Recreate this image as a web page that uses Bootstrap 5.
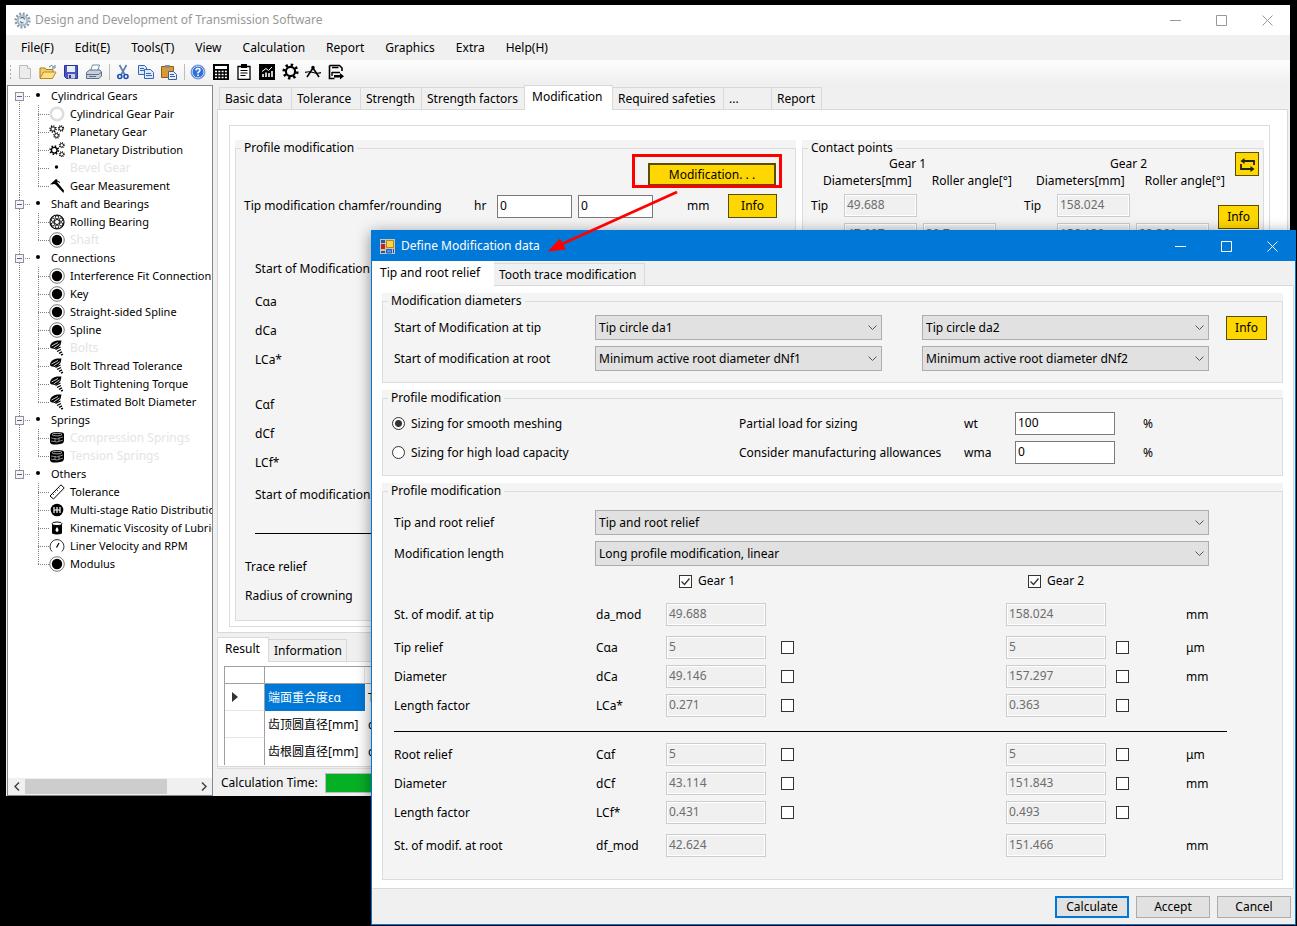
<!DOCTYPE html>
<html lang="en">
<head>
<meta charset="utf-8">
<meta name="viewport" content="width=device-width, initial-scale=1">
<title>Design and Development of Transmission Software</title>
<link href="https://cdn.jsdelivr.net/npm/bootstrap@5.3.0/dist/css/bootstrap.min.css" rel="stylesheet">
<style>
  body { background: #000; color: #000; font: 12px/16px "Noto Sans", "Noto Sans CJK SC", sans-serif; }
  button, input, select { font: inherit; color: inherit; border-radius: 0; }
  a { color: inherit; text-decoration: none; }
  label, .nowrap { white-space: nowrap; }

  /* windows */
  .app-window { margin: 5px 7px 0 6px; background: #f0f0f0; }
  .title-bar { height: 30px; background: #fff; color: #999; padding-left: 8px; }
  .win-btn { width: 46px; height: 30px; padding: 0; border: 0; background: none; color: inherit; }
  .win-btn svg { display: block; margin: auto; }
  .menu-bar { height: 25px; padding-left: 4px; }
  .menu-bar a { padding: 0 10px 0 11px; }
  .tool-bar { height: 25px; padding: 0 0 2px 3px; gap: 3px; background: linear-gradient(#fdfdfd, #efefef); }
  .tool-bar button { width: 20px; height: 22px; padding: 0; border: 0; background: none; }
  .tool-bar svg { display: block; margin: auto; }
  .grip { width: 3px; height: 15px; background: radial-gradient(circle, #aaa 1px, transparent 1px) 0 0 / 3px 4px; }
  .tool-sep { width: 3px; height: 16px; border-right: 1px solid #bdbdbd; }

  /* navigation tree */
  .tree-pane { flex: 0 0 206px; margin-left: 1px; background: #fff; border: 1px solid #828790; overflow: hidden; font-size: 11px; }
  .tree-pane ul { list-style: none; margin: 0; padding: 0; }
  .tree-pane .tree-root { padding-top: 1px; }
  .tree-row { height: 18px; display: flex; align-items: center; white-space: nowrap; }
  .branch { background: repeating-linear-gradient(#808080 0 1px, transparent 1px 2px) 11px 0 / 1px 100% no-repeat; }
  .branch:first-child { background-position: 11px 9px; }
  .branch:last-child { background-size: 1px 9px; }
  .branch > .tree-row { padding-left: 7px; }
  .expander { width: 9px; height: 9px; padding: 0; border: 1px solid #919191; background: linear-gradient(#4b63a7, #4b63a7) 1px 3px / 5px 1px no-repeat #f4f4f4; }
  .dash { width: 6px; height: 1px; margin-right: 6px; background: repeating-linear-gradient(90deg, transparent 0 1px, #808080 1px 2px); }
  .bullet { width: 4px; height: 4px; border-radius: 50%; background: #000; margin: 0 11px 2px 0; }
  .leaf { padding-left: 41px; background:
    repeating-linear-gradient(#808080 0 1px, transparent 1px 2px) 30px 0 / 1px 100% no-repeat,
    repeating-linear-gradient(90deg, #808080 0 1px, transparent 1px 2px) 30px 9px / 11px 1px no-repeat; }
  .leaf:last-child { background-size: 1px 9px, 11px 1px; }
  .leaf svg { flex: none; margin-right: 5px; }
  .leaf.off a { color: #e4e4e4; font-size: 12px; }
  .h-scroll { height: 17px; background: #f0f0f0; }
  .h-scroll .thumb { width: 142px; height: 15px; background: #cdcdcd; }
  .h-scroll button { width: 17px; height: 17px; border: 0; padding: 0; background: none; }
  .h-scroll svg { display: block; margin: auto; }

  /* tabs */
  .tab-strip { padding-left: 2px; align-items: flex-end; }
  .tab-strip button { height: 22px; padding: 0 4px 0 5px; border: 1px solid #d9d9d9; border-bottom: 0; margin-right: -1px; background: #f0f0f0; text-align: left; white-space: nowrap; }
  .tab-strip .active { height: 25px; margin: 0 -1px -1px -1px; padding: 0 7px 3px; background: #fff; position: relative; }
  .main-tabs button { min-width: 62px; }
  .main-tabs button:nth-child(1) { min-width: 73px; }
  .main-tabs button:nth-child(2) { min-width: 70px; }
  .main-tabs button:nth-child(4) { min-width: 105px; }
  .main-tabs button:nth-child(5) { min-width: 89px; }
  .main-tabs button:nth-child(6) { min-width: 112px; }
  .main-tabs button:nth-child(7) { min-width: 49px; }
  .main-tabs button:nth-child(8) { min-width: 51px; }
  .result-tabs { padding-left: 0; }
  .result-tabs button:nth-child(1) { min-width: 52px; }
  .result-tabs button:nth-child(2) { min-width: 78px; }
  .dialog-tabs { padding-left: 1px; }
  .dialog-tabs button:nth-child(1) { min-width: 122px; border-color: #fff; }
  .dialog-tabs button:nth-child(2) { min-width: 152px; }
  .tab-page { background: #fff; border: 1px solid #d9d9d9; }
  .work-pane { margin: 0 2px 0 4px; min-width: 0; }
  .work-page { padding: 15px 17px 5px 11px; }
  .work-frame { border: 1px solid #dcdcdc; padding: 14px 5px 5px; gap: 6px; }

  /* group boxes */
  .group-bg { background: #f4f4f4; min-width: 0; }
  .group-bg fieldset { border: 1px solid #dcdcdc; height: 100%; }
  .group-bg legend { float: none; width: auto; margin: 0 0 0 5px; padding: 0 3px; font-size: 12px; line-height: 16px; }
  .group-profile { flex: 561 1 0; }
  .group-contact { flex: 462 1 0; }

  /* fields */
  .field { width: 100%; min-width: 0; height: 23px; padding: 0 2px 2px; border: 1px solid #7a7a7a; background: #fff; }
  .field:disabled { border-color: #ccc; background: #f0f0f0; color: #6d6d6d; box-shadow: inset 0 0 0 1px #fff; }
  .combo { width: 100%; height: 25px; padding: 0 20px 0 3px; border: 1px solid #adadad; appearance: none;
    background: #e1e1e1 url("data:image/svg+xml,%3Csvg xmlns='http://www.w3.org/2000/svg' width='9' height='6'%3E%3Cpath d='M.5.5l4 4 4-4' fill='none' stroke='%23555'/%3E%3C/svg%3E") right 4px center no-repeat; }
  .gold { height: 24px; padding: 0; border: 1px solid #5c4d00; background: gold; }
  .gold-strong { width: 128px; height: 23px; border-width: 2px; }
  .tick { appearance: none; flex: none; width: 13px; height: 13px; margin: 0; border: 1px solid #333; background: #fff; }
  .tick:checked { background: #fff url("data:image/svg+xml,%3Csvg xmlns='http://www.w3.org/2000/svg' width='11' height='11'%3E%3Cpath d='M1.500 5.500l3 3 5-6' fill='none' stroke='%23333' stroke-width='1.300'/%3E%3C/svg%3E"); }
  .tick[type=radio] { border-radius: 50%; }
  .tick[type=radio]:checked { background: radial-gradient(circle, #333 3px, #fff 4px); }
  .rule { height: 1px; background: #000; }

  .mod-row { display: flex; justify-content: flex-end; padding: 7px 19px 0 0; }
  .tip-row { display: grid; grid-template-columns: 1fr 23px 75px 6px 75px 34px 41px 49px; align-items: center; padding: 8px 18px 0 8px; }
  .bg-row { height: 29px; display: flex; align-items: center; padding-left: 19px; }
  .bg-row.tall { height: 36px; }
  .bg-row.wide { padding-left: 9px; }
  .bg-row.first-row { margin-top: 33px; }
  .bg-rule { margin: 20px 19px 18px; }
  .group-end { margin-bottom: 10px; }
  .gear-block { flex: 0 0 185px; min-width: 0; }
  .gear-head { height: 18px; padding-left: 12px; gap: 20px; }
  .gear-row { display: grid; grid-template-columns: 33px 73px 6px 73px; align-items: center; margin-bottom: 6px; }
  .gear-tools { margin-top: -4px; gap: 29px; }

  /* result grid */
  .result-page { padding: 4px 0 1px 6px; }
  .result-grid { width: 100%; table-layout: fixed; border-collapse: separate; border-spacing: 0; border-top: 1px solid #a0a0a0; border-left: 1px solid #a0a0a0; }
  .result-grid th, .result-grid td { height: 27px; padding: 0 3px; border-bottom: 1px solid #e5e5e5; font-weight: 400; white-space: nowrap; }
  .result-grid tr > :first-child { border-right: 1px solid #a0a0a0; }
  .result-grid thead th { height: 17px; border-bottom: 1px solid #a0a0a0; border-right: 1px solid #e5e5e5; }
  .result-grid tbody tr:last-child > * { border-bottom: 0; }
  .result-grid td { border-bottom: 0; }
  .result-grid .picked { background: #0078d7; color: #fff; }
  .status { height: 28px; padding: 1px 0 0 4px; border-top: 1px solid #dcdcdc; margin-top: 1px; gap: 7px; }
  .status .progress { height: 20px; flex: 1; border-radius: 0; border: 1px solid #bcbcbc; background: #e6e6e6; }
  .status .progress-bar { background: #06b025; }

  /* dialog */
  .dialog-window { position: absolute; left: 371px; right: 1px; top: 230px; z-index: 2; background: #f0f0f0; border: 1px solid #0078d7; box-shadow: 0 3px 14px rgba(0,0,0,.45); }
  .dialog-title { height: 30px; background: #0078d7; color: #fff; padding-left: 8px; gap: 6px; }
  .dialog-page { padding: 7px 10px 8px 9px; margin-right: 1px; border-left-color: #fff; display: flex; flex-direction: column; gap: 7px; }
  .body { padding: 6px 15px 11px 11px; }
  .grid-diam { display: grid; grid-template-columns: 201px minmax(0,1fr) 40px minmax(0,1fr) 17px 41px; row-gap: 6px; align-items: center; }
  .grid-size { display: grid; grid-template-columns: 1fr 225px 51px 100px 28px 124px; row-gap: 6px; align-items: center; }
  .grid-size .choice { display: flex; align-items: center; gap: 6px; margin-left: -2px; }
  .body-long { padding: 11px 15px 16px 11px; }
  .grid-combo { display: grid; grid-template-columns: 201px minmax(0,1fr); row-gap: 6px; align-items: center; padding-right: 58px; }
  .grid-val { display: grid; grid-template-columns: 202px 70px 100px 28px 1fr 100px 23px 138px; align-items: center; margin-bottom: 6px; }
  .grid-val > .tick { justify-self: end; }
  .grid-val .unit { grid-column: 8; padding-left: 57px; }
  .g2 { grid-column: 6; }
  .gear-checks { margin: 7px 0 14px; }
  .gear-check { display: flex; align-items: center; gap: 6px; padding-left: 13px; }
  .gear-check.g2 { padding-left: 22px; }
  .apart { padding-top: 4px; }
  .body-rule { margin: 14px 40px 11px 0; }
  .dialog-foot { height: 35px; padding-right: 4px; gap: 7px; }
  .dialog-foot button { width: 74px; height: 22px; padding: 0; border: 1px solid #adadad; background: #e1e1e1; }
  .dialog-foot .main-action { border: 2px solid #0078d7; }
  .callout { position: absolute; left: 540px; top: 150px; z-index: 3; pointer-events: none; }
</style>
</head>
<body>

<svg class="d-none" aria-hidden="true">
  <symbol id="i-ring" viewBox="0 0 16 16"><circle cx="8" cy="8" r="6.300" fill="none" stroke="#ddd" stroke-width="2.600"/></symbol>
  <symbol id="i-dot" viewBox="0 0 16 16"><circle cx="8" cy="8" r="7.300" fill="#fff" stroke="#555" stroke-width=".8"/><circle cx="8" cy="8" r="5.200"/></symbol>
  <symbol id="i-cog" viewBox="0 0 16 16"><g fill="none" stroke="currentColor"><circle cx="8" cy="8" r="4.300" stroke-width="2"/><circle cx="8" cy="8" r="6.200" stroke-width="2.800" stroke-dasharray="2.200 2.670"/></g></symbol>
  <symbol id="i-gears" viewBox="0 0 16 16"><use href="#i-cog" x="0" y="1" width="8" height="8"/><use href="#i-cog" x="8.500" y="1" width="7" height="7"/><use href="#i-cog" x="4" y="8" width="7" height="7"/></symbol>
  <symbol id="i-gears2" viewBox="0 0 16 16"><use href="#i-cog" x="0" y="3" width="10.500" height="10.500"/><use href="#i-cog" x="9.500" y="0" width="6.500" height="6.500"/><use href="#i-cog" x="9.500" y="9" width="6.500" height="6.500"/></symbol>
  <symbol id="i-spot" viewBox="0 0 16 16"><circle cx="7.500" cy="7" r="1.700"/></symbol>
  <symbol id="i-caliper" viewBox="0 0 16 16"><path d="M1 6.500L7 1l1.500 1L8 4l7 8.500-.5 2.500L6.500 6.500 5 6z"/><path d="M8 3l3 1.500M3 6l2-1" stroke="#000"/></symbol>
  <symbol id="i-bearing" viewBox="0 0 16 16"><g fill="none" stroke="#000" stroke-width=".9"><circle cx="8" cy="8" r="7" stroke-width="1.200"/><circle cx="8" cy="8" r="2.500"/><circle cx="8" cy="3.300" r="1.700"/><circle cx="8" cy="12.700" r="1.700"/><circle cx="3.900" cy="5.700" r="1.700"/><circle cx="12.100" cy="5.700" r="1.700"/><circle cx="3.900" cy="10.300" r="1.700"/><circle cx="12.100" cy="10.300" r="1.700"/></g></symbol>
  <symbol id="i-bolt" viewBox="0 0 16 16"><path d="M1 6Q2 1.500 8 .5h4.500L11.500 5 8 8.500 5 9 1.500 8z"/><path d="M2.500 6L9 2.500M4.500 8l6-4" stroke="#fff" stroke-width=".8"/><path d="M6.500 9.500l5-2.500M8 11.500l4-2M10 13.300l3-1.500M12 15.200l2-1" stroke="#000" stroke-width="1.300"/></symbol>
  <symbol id="i-spring" viewBox="0 0 16 16"><path d="M1 5q0-3 7-3t7 2v7q0 3-7 3.500t-7-2.500z"/><ellipse cx="8" cy="4.600" rx="5" ry="1.300" fill="none" stroke="#ccc" stroke-width=".8"/><path d="M2 8q6 2.500 12-1M2 11q6 2.500 12-1M6 8v4M10 7.500v4" fill="none" stroke="#aaa" stroke-width=".8"/></symbol>
  <symbol id="i-ruler" viewBox="0 0 16 16"><path d="M1 12L12 .8 15.200 4 4.500 15z" fill="#fff" stroke="#000"/><path d="M3.500 9.500l1.500 1.500M5.500 7.500l1 1M7.500 5.500L9 7M9.500 3.500l1 1" stroke="#000" stroke-width=".8"/></symbol>
  <symbol id="i-shift" viewBox="0 0 16 16"><circle cx="8" cy="8" r="6.300"/><path d="M5 5v6M8 5v6M11 5v6M5 8h6" stroke="#fff" stroke-width="1.200"/></symbol>
  <symbol id="i-oil" viewBox="0 0 16 16"><path d="M3 5h10v8.500q-5 2-10 0z"/><ellipse cx="8" cy="3.800" rx="5" ry="1.800" fill="#fff" stroke="#000"/><path d="M8 7q3 4 0 5-3-1 0-5z" fill="#fff"/></symbol>
  <symbol id="i-dial" viewBox="0 0 16 16"><path d="M3 13.500A7 7 0 1 1 13 13.500" fill="none" stroke="#333"/><path d="M7.500 9.500L10 5" stroke="#000" stroke-width="1.300"/></symbol>
  <symbol id="w-min" viewBox="0 0 11 11"><path d="M0 5.500h11" stroke="currentColor"/></symbol>
  <symbol id="w-max" viewBox="0 0 11 11"><path d="M.5.5h10v10H.5z" fill="none" stroke="currentColor"/></symbol>
  <symbol id="w-close" viewBox="0 0 11 11"><path d="M.5.5l10 10M10.500.5l-10 10" fill="none" stroke="currentColor"/></symbol>
</svg>

<main class="app-window">
  <header class="title-bar d-flex align-items-center">
    <svg class="me-1" width="17" height="17" viewBox="0 0 16 16"><circle cx="8" cy="8" r="6.300" fill="none" stroke="#8a9ba8" stroke-width="2.600" stroke-dasharray="1.800 1.500"/><circle cx="8" cy="8" r="4.500" fill="#e7eef3" stroke="#a9bbc8" stroke-width="2"/><path d="M6 6q3-2 4 1M6 9q1 2 3 1" fill="none" stroke="#4c5a66"/></svg>
    <span>Design and Development of Transmission Software</span>
    <div class="ms-auto d-flex">
      <button class="win-btn" aria-label="Minimize"><svg width="11" height="11"><use href="#w-min"/></svg></button>
      <button class="win-btn" aria-label="Maximize"><svg width="11" height="11"><use href="#w-max"/></svg></button>
      <button class="win-btn" aria-label="Close"><svg width="11" height="11"><use href="#w-close"/></svg></button>
    </div>
  </header>

  <nav class="menu-bar d-flex align-items-center">
    <a href="#">File(F)</a><a href="#">Edit(E)</a><a href="#">Tools(T)</a><a href="#">View</a><a href="#">Calculation</a><a href="#">Report</a><a href="#">Graphics</a><a href="#">Extra</a><a href="#">Help(H)</a>
  </nav>

  <div class="tool-bar d-flex align-items-center" role="toolbar">
    <span class="grip"></span>
    <button aria-label="New"><svg width="16" height="16" viewBox="0 0 16 16"><path d="M2.500 1.500h8l3 3v10h-11z" fill="#ececec" stroke="#bbb"/><path d="M10.500 1.500v3h3" fill="#fff" stroke="#bbb"/></svg></button>
    <button aria-label="Open"><svg width="18" height="16" viewBox="0 0 18 16"><path d="M1 14V4h5l1 1.500h7V8" fill="#f6cf62" stroke="#a87d1a"/><path d="M1 14.500L4.500 8H17l-3.500 6.500z" fill="#ffe08a" stroke="#b88a20"/><path d="M10 3q3-3 5 0m1-2v3h-3" fill="none" stroke="#5d7fa8"/></svg></button>
    <button aria-label="Save"><svg width="16" height="16" viewBox="0 0 16 16"><path d="M1.500 1.500h13v13h-11l-2-2z" fill="#4a56c8" stroke="#2c3590"/><path d="M4 2h8v6H4z" fill="#e8eefa"/><path d="M5 10h7v4.500H5z" fill="#c9cfe0"/><path d="M6 11h2v3H6z" fill="#2c3590"/></svg></button>
    <button aria-label="Print"><svg width="16" height="16" viewBox="0 0 16 16"><path d="M4.500 7l2-6h7l-2 6z" fill="#fff" stroke="#7b8aa0"/><path d="M.5 8.500l3-2.500H14l1.500 2v4l-2.500 2.500H.5z" fill="#c7d0de" stroke="#5f6e85"/><path d="M1 10.500h11.500L15 8.500M3 12.500h7" stroke="#5f6e85" fill="none"/></svg></button>
    <span class="tool-sep"></span>
    <button aria-label="Cut"><svg width="16" height="16" viewBox="0 0 16 16"><path d="M4.500 1L10 11M11.500 1L6 11" stroke="#5b7cae" stroke-width="1.600"/><g fill="none" stroke="#1c4fb0" stroke-width="1.600"><circle cx="4.800" cy="12.500" r="2"/><circle cx="11" cy="12.500" r="2"/></g></svg></button>
    <button aria-label="Copy"><svg width="16" height="16" viewBox="0 0 16 16"><g fill="#dce9fb" stroke="#3b66b5"><path d="M.5 1.500h6l2 2v7h-8z"/><path d="M6.500 5.500h6l3 3v6h-9z"/></g><path d="M2 4.500h4M2 6.500h4M8 9.500h5M8 11.500h6" stroke="#3b66b5"/></svg></button>
    <button aria-label="Paste"><svg width="16" height="16" viewBox="0 0 16 16"><path d="M.5 2.500h12v11H.5z" fill="#d79a35" stroke="#8b6015"/><path d="M4 1h5v3H4z" fill="#8b8b8b"/><path d="M7.500 7.500h5l3 3v5h-8z" fill="#e5eefb" stroke="#3b5f9c"/><path d="M9 10.500h4M9 12.500h5" stroke="#3b5f9c"/></svg></button>
    <span class="tool-sep"></span>
    <button aria-label="Help"><svg width="16" height="16" viewBox="0 0 16 16"><circle cx="8" cy="8" r="7" fill="#2f6fdc" stroke="#7c9bd0"/><circle cx="8" cy="8" r="5.800" fill="none" stroke="#fff" stroke-width=".7"/><path d="M6 6.500q0-2 2-2t2 1.700q0 1-2 2.300v1" fill="none" stroke="#fff" stroke-width="1.500"/><path d="M7.200 10.500h1.600V12H7.200z" fill="#fff"/></svg></button>
    <button aria-label="Calculator"><svg width="16" height="16" viewBox="0 0 16 16"><path d="M0 0h16v16H0z"/><path d="M2 2h12v3H2z" fill="#fff"/><path d="M2 7.500h12M2 10.500h12M2 13.500h12" stroke="#fff" stroke-width="1.600" stroke-dasharray="2 1.300"/></svg></button>
    <button aria-label="Report"><svg width="16" height="16" viewBox="0 0 16 16"><path d="M2 2.500h12v13H2z" fill="#fff" stroke="#000" stroke-width="1.300"/><path d="M5 0h6v4H5z"/><path d="M4.500 6.500h7M4.500 9h7M4.500 11.500h5" stroke="#000"/></svg></button>
    <button aria-label="Chart"><svg width="16" height="16" viewBox="0 0 16 16"><path d="M0 0h16v16H0z"/><path d="M4 13v-3M7 13V8.500M10 13v-4M13 13V7" stroke="#fff" stroke-width="1.600"/><path d="M3 7.500l4-3 2.500 2L13 3" stroke="#fff" fill="none"/></svg></button>
    <button aria-label="Settings"><svg width="17" height="17"><use href="#i-cog"/></svg></button>
    <button aria-label="Angle"><svg width="16" height="16" viewBox="0 0 16 16"><path d="M8 4l6 9M8 4L2 13" stroke="#000" stroke-width="1.600"/><path d="M0 8.500q4-1.500 8 0t8 0" stroke="#000" stroke-width="1.200" fill="none"/><circle cx="8" cy="3.500" r="1.700"/></svg></button>
    <button aria-label="Save as"><svg width="16" height="16" viewBox="0 0 16 16"><path d="M1.500 1.500h10l2.500 2.500v3M6.500 14.500h-5v-13" fill="none" stroke="#000" stroke-width="1.600"/><path d="M4 3.500h6.500M4 8.500h8M4 8v4" fill="none" stroke="#000" stroke-width="1.400"/><path d="M6 11h6V9l4 3.200-4 3.200v-2H6z"/></svg></button>
  </div>

  <div class="d-flex">
    <nav class="tree-pane d-flex flex-column">
      <ul class="tree-root flex-fill">
        <li class="branch">
          <div class="tree-row"><button class="expander" aria-label="Collapse"></button><span class="dash"></span><span class="bullet"></span><a href="#">Cylindrical Gears</a></div>
          <ul>
            <li class="tree-row leaf"><svg width="16" height="16"><use href="#i-ring"/></svg><a href="#">Cylindrical Gear Pair</a></li>
            <li class="tree-row leaf"><svg width="16" height="16"><use href="#i-gears"/></svg><a href="#">Planetary Gear</a></li>
            <li class="tree-row leaf"><svg width="16" height="16"><use href="#i-gears2"/></svg><a href="#">Planetary Distribution</a></li>
            <li class="tree-row leaf off"><svg width="16" height="16"><use href="#i-spot"/></svg><a href="#">Bevel Gear</a></li>
            <li class="tree-row leaf"><svg width="16" height="16"><use href="#i-caliper"/></svg><a href="#">Gear Measurement</a></li>
          </ul>
        </li>
        <li class="branch">
          <div class="tree-row"><button class="expander" aria-label="Collapse"></button><span class="dash"></span><span class="bullet"></span><a href="#">Shaft and Bearings</a></div>
          <ul>
            <li class="tree-row leaf"><svg width="16" height="16"><use href="#i-bearing"/></svg><a href="#">Rolling Bearing</a></li>
            <li class="tree-row leaf off"><svg width="16" height="16"><use href="#i-dot"/></svg><a href="#">Shaft</a></li>
          </ul>
        </li>
        <li class="branch">
          <div class="tree-row"><button class="expander" aria-label="Collapse"></button><span class="dash"></span><span class="bullet"></span><a href="#">Connections</a></div>
          <ul>
            <li class="tree-row leaf"><svg width="16" height="16"><use href="#i-dot"/></svg><a href="#">Interference Fit Connection</a></li>
            <li class="tree-row leaf"><svg width="16" height="16"><use href="#i-dot"/></svg><a href="#">Key</a></li>
            <li class="tree-row leaf"><svg width="16" height="16"><use href="#i-dot"/></svg><a href="#">Straight-sided Spline</a></li>
            <li class="tree-row leaf"><svg width="16" height="16"><use href="#i-dot"/></svg><a href="#">Spline</a></li>
            <li class="tree-row leaf off"><svg width="16" height="16"><use href="#i-bolt"/></svg><a href="#">Bolts</a></li>
            <li class="tree-row leaf"><svg width="16" height="16"><use href="#i-bolt"/></svg><a href="#">Bolt Thread Tolerance</a></li>
            <li class="tree-row leaf"><svg width="16" height="16"><use href="#i-bolt"/></svg><a href="#">Bolt Tightening Torque</a></li>
            <li class="tree-row leaf"><svg width="16" height="16"><use href="#i-bolt"/></svg><a href="#">Estimated Bolt Diameter</a></li>
          </ul>
        </li>
        <li class="branch">
          <div class="tree-row"><button class="expander" aria-label="Collapse"></button><span class="dash"></span><span class="bullet"></span><a href="#">Springs</a></div>
          <ul>
            <li class="tree-row leaf off"><svg width="16" height="16"><use href="#i-spring"/></svg><a href="#">Compression Springs</a></li>
            <li class="tree-row leaf off"><svg width="16" height="16"><use href="#i-spring"/></svg><a href="#">Tension Springs</a></li>
          </ul>
        </li>
        <li class="branch">
          <div class="tree-row"><button class="expander" aria-label="Collapse"></button><span class="dash"></span><span class="bullet"></span><a href="#">Others</a></div>
          <ul>
            <li class="tree-row leaf"><svg width="16" height="16"><use href="#i-ruler"/></svg><a href="#">Tolerance</a></li>
            <li class="tree-row leaf"><svg width="16" height="16"><use href="#i-shift"/></svg><a href="#">Multi-stage Ratio Distribution</a></li>
            <li class="tree-row leaf"><svg width="16" height="16"><use href="#i-oil"/></svg><a href="#">Kinematic Viscosity of Lubricants</a></li>
            <li class="tree-row leaf"><svg width="16" height="16"><use href="#i-dial"/></svg><a href="#">Liner Velocity and RPM</a></li>
            <li class="tree-row leaf"><svg width="16" height="16"><use href="#i-dot"/></svg><a href="#">Modulus</a></li>
          </ul>
        </li>
      </ul>
      <div class="h-scroll d-flex align-items-center">
        <button aria-label="Scroll left"><svg width="6" height="9" viewBox="0 0 6 9"><path d="M5 .5l-4 4 4 4" fill="none" stroke="#404040" stroke-width="1.500"/></svg></button>
        <span class="thumb"></span>
        <button class="ms-auto" aria-label="Scroll right"><svg width="6" height="9" viewBox="0 0 6 9"><path d="M1 .5l4 4-4 4" fill="none" stroke="#404040" stroke-width="1.500"/></svg></button>
      </div>
    </nav>

    <div class="work-pane flex-fill">
      <div class="tab-strip main-tabs d-flex" role="tablist">
        <button role="tab">Basic data</button><button role="tab">Tolerance</button><button role="tab">Strength</button><button role="tab">Strength factors</button><button role="tab" class="active">Modification</button><button role="tab">Required safeties</button><button role="tab">...</button><button role="tab">Report</button>
      </div>
      <section class="tab-page work-page">
        <div class="work-frame d-flex">
          <div class="group-bg group-profile">
            <fieldset>
              <legend>Profile modification</legend>
              <div class="mod-row"><button class="gold gold-strong">Modification. . .</button></div>
              <div class="tip-row">
                <label for="hr1">Tip modification chamfer/rounding</label><span>hr</span>
                <input class="field" id="hr1" value="0"><span></span><input class="field" value="0" aria-label="Rounding"><span></span>
                <span>mm</span><button class="gold">Info</button>
              </div>
              <div class="bg-row tall first-row">Start of Modification at tip</div>
              <div class="bg-row">Cαa</div>
              <div class="bg-row">dCa</div>
              <div class="bg-row">LCa*</div>
              <div class="bg-row mt-3">Cαf</div>
              <div class="bg-row">dCf</div>
              <div class="bg-row">LCf*</div>
              <div class="bg-row tall">Start of modification at root</div>
              <div class="rule bg-rule"></div>
              <div class="bg-row wide"><span class="col-3 flex-shrink-0">Trace relief</span><span>Cβ</span></div>
              <div class="bg-row wide group-end">Radius of crowning</div>
            </fieldset>
          </div>
          <div class="group-bg group-contact">
            <fieldset>
              <legend>Contact points</legend>
              <div class="d-flex ps-2 pe-1">
                <div class="gear-block me-4">
                  <div class="text-center ps-2">Gear 1</div>
                  <div class="gear-head d-flex align-items-center nowrap mb-1"><span>Diameters[mm]</span><span>Roller angle[°]</span></div>
                  <div class="gear-row"><label for="t1">Tip</label><input class="field" id="t1" value="49.688" disabled></div>
                  <div class="gear-row"><label for="e1">E</label><input class="field" id="e1" value="47.097" disabled><span></span><input class="field" value="30.7" aria-label="Roller angle 1" disabled></div>
                </div>
                <div class="gear-block ms-1">
                  <div class="text-center ps-4">Gear 2</div>
                  <div class="gear-head d-flex align-items-center nowrap mb-1"><span>Diameters[mm]</span><span>Roller angle[°]</span></div>
                  <div class="gear-row"><label for="t2">Tip</label><input class="field" id="t2" value="158.024" disabled></div>
                  <div class="gear-row"><label for="e2">A</label><input class="field" id="e2" value="156.130" disabled><span></span><input class="field" value="22.361" aria-label="Roller angle 2" disabled></div>
                </div>
                <div class="gear-tools ms-auto d-flex flex-column align-items-end">
                  <button class="gold" aria-label="Swap"><svg class="d-block" width="22" height="22" viewBox="0 0 22 22"><g fill="none" stroke="#222" stroke-width="1.800"><path d="M6 8h12v4M17 16H5v-5"/></g><path d="M8.500 5L4.500 8l4 3zM14.500 13l4 3-4 3z" fill="#222"/></svg></button>
                  <button class="gold px-2">Info</button>
                </div>
              </div>
            </fieldset>
          </div>
        </div>
      </section>

      <div class="tab-strip result-tabs d-flex mt-1" role="tablist"><button role="tab" class="active ms-0">Result</button><button role="tab">Information</button></div>
      <section class="tab-page result-page">
        <table class="result-grid">
          <colgroup><col style="width:40px"><col style="width:100px"><col></colgroup>
          <thead><tr><th></th><th></th><th></th></tr></thead>
          <tbody>
            <tr><th><svg class="d-block ms-1" width="6" height="10" viewBox="0 0 6 10"><path d="M0 0l6 5-6 5z" fill="#333"/></svg></th><td class="picked">端面重合度εα</td><td>Transverse</td></tr>
            <tr><th></th><td>齿顶圆直径[mm]</td><td>da</td></tr>
            <tr><th></th><td>齿根圆直径[mm]</td><td>df</td></tr>
          </tbody>
        </table>
      </section>
      <div class="status d-flex align-items-center"><span>Calculation Time:</span>
        <div class="progress" role="progressbar" aria-label="Calculation progress" aria-valuenow="100" aria-valuemin="0" aria-valuemax="100"><div class="progress-bar" style="width:100%"></div></div>
      </div>
    </div>
  </div>
</main>

<section class="dialog-window" role="dialog" aria-label="Define Modification data">
  <header class="dialog-title d-flex align-items-center">
    <svg width="15" height="15" viewBox="0 0 15 15"><path d="M0 0h15v15H0z" fill="#c9c5b8"/><path d="M1 1h4v3H1zM1 12h4v2H1zM13 10h1v4h-1z" fill="#245a9c"/><path d="M1 5h4v5H1z" fill="#c02418"/><path d="M6.500 1.500h7v7h-7z" fill="#ffd24a" stroke="#b8860b"/><path d="M6.500 10.500h5v3.500h-5z" fill="#4f8ef0" stroke="#235ab5"/></svg>
    <span>Define Modification data</span>
    <div class="ms-auto d-flex">
      <button class="win-btn" aria-label="Minimize"><svg width="11" height="11"><use href="#w-min"/></svg></button>
      <button class="win-btn" aria-label="Maximize"><svg width="11" height="11"><use href="#w-max"/></svg></button>
      <button class="win-btn" aria-label="Close"><svg width="11" height="11"><use href="#w-close"/></svg></button>
    </div>
  </header>
  <div class="tab-strip dialog-tabs d-flex" role="tablist"><button role="tab" class="active">Tip and root relief</button><button role="tab">Tooth trace modification</button></div>
  <div class="tab-page dialog-page">
    <div class="group-bg">
      <fieldset>
        <legend>Modification diameters</legend>
        <div class="body grid-diam">
          <label for="s1">Start of Modification at tip</label>
          <select class="combo" id="s1"><option>Tip circle da1</option></select><span></span>
          <select class="combo" aria-label="Tip, gear 2"><option>Tip circle da2</option></select><span></span>
          <button class="gold">Info</button>
          <label for="s2">Start of modification at root</label>
          <select class="combo" id="s2"><option>Minimum active root diameter dNf1</option></select><span></span>
          <select class="combo" aria-label="Root, gear 2"><option>Minimum active root diameter dNf2</option></select>
        </div>
      </fieldset>
    </div>
    <div class="group-bg">
      <fieldset>
        <legend>Profile modification</legend>
        <div class="body grid-size">
          <div class="choice"><input class="tick" type="radio" name="sizing" id="r1" checked><label for="r1">Sizing for smooth meshing</label></div>
          <label for="wt">Partial load for sizing</label><span>wt</span><input class="field" id="wt" value="100"><span></span><span>%</span>
          <div class="choice"><input class="tick" type="radio" name="sizing" id="r2"><label for="r2">Sizing for high load capacity</label></div>
          <label for="wma">Consider manufacturing allowances</label><span>wma</span><input class="field" id="wma" value="0"><span></span><span>%</span>
        </div>
      </fieldset>
    </div>
    <div class="group-bg">
      <fieldset>
        <legend>Profile modification</legend>
        <div class="body-long">
          <div class="grid-combo">
            <label for="c1">Tip and root relief</label><select class="combo" id="c1"><option>Tip and root relief</option></select>
            <label for="c2">Modification length</label><select class="combo" id="c2"><option>Long profile modification, linear</option></select>
          </div>
          <div class="grid-val gear-checks">
            <span></span><span></span>
            <div class="gear-check"><input class="tick" type="checkbox" id="g1" checked><label for="g1">Gear 1</label></div>
            <div class="gear-check g2"><input class="tick" type="checkbox" id="g2" checked><label for="g2">Gear 2</label></div>
          </div>
          <div class="grid-val"><label for="v1">St. of modif. at tip</label><span>da_mod</span><input class="field" id="v1" value="49.688" disabled><input class="field g2" value="158.024" aria-label="da_mod gear 2" disabled><span class="unit">mm</span></div>
          <div class="grid-val apart"><label for="v2">Tip relief</label><span>Cαa</span><input class="field" id="v2" value="5" disabled><input class="tick" type="checkbox" aria-label="Cαa 1"><input class="field g2" value="5" aria-label="Cαa gear 2" disabled><input class="tick" type="checkbox" aria-label="Cαa 2"><span class="unit">μm</span></div>
          <div class="grid-val"><label for="v3">Diameter</label><span>dCa</span><input class="field" id="v3" value="49.146" disabled><input class="tick" type="checkbox" aria-label="dCa 1"><input class="field g2" value="157.297" aria-label="dCa gear 2" disabled><input class="tick" type="checkbox" aria-label="dCa 2"><span class="unit">mm</span></div>
          <div class="grid-val"><label for="v4">Length factor</label><span>LCa*</span><input class="field" id="v4" value="0.271" disabled><input class="tick" type="checkbox" aria-label="LCa 1"><input class="field g2" value="0.363" aria-label="LCa gear 2" disabled><input class="tick" type="checkbox" aria-label="LCa 2"></div>
          <div class="rule body-rule"></div>
          <div class="grid-val"><label for="v5">Root relief</label><span>Cαf</span><input class="field" id="v5" value="5" disabled><input class="tick" type="checkbox" aria-label="Cαf 1"><input class="field g2" value="5" aria-label="Cαf gear 2" disabled><input class="tick" type="checkbox" aria-label="Cαf 2"><span class="unit">μm</span></div>
          <div class="grid-val"><label for="v6">Diameter</label><span>dCf</span><input class="field" id="v6" value="43.114" disabled><input class="tick" type="checkbox" aria-label="dCf 1"><input class="field g2" value="151.843" aria-label="dCf gear 2" disabled><input class="tick" type="checkbox" aria-label="dCf 2"><span class="unit">mm</span></div>
          <div class="grid-val"><label for="v7">Length factor</label><span>LCf*</span><input class="field" id="v7" value="0.431" disabled><input class="tick" type="checkbox" aria-label="LCf 1"><input class="field g2" value="0.493" aria-label="LCf gear 2" disabled><input class="tick" type="checkbox" aria-label="LCf 2"></div>
          <div class="grid-val apart"><label for="v8">St. of modif. at root</label><span>df_mod</span><input class="field" id="v8" value="42.624" disabled><input class="field g2" value="151.466" aria-label="df_mod gear 2" disabled><span class="unit">mm</span></div>
        </div>
      </fieldset>
    </div>
  </div>
  <footer class="dialog-foot d-flex align-items-center justify-content-end">
    <button class="main-action">Calculate</button><button>Accept</button><button>Cancel</button>
  </footer>
</section>

<svg class="callout" width="246" height="106" viewBox="540 150 246 106" aria-hidden="true">
  <path d="M633.500 155.500h147v31h-147z" fill="none" stroke="#f00" stroke-width="3"/>
  <path d="M677 192L562 244" stroke="#f00" stroke-width="2.600"/>
  <path d="M547.500 251.500L560 238.500 566 249.500z" fill="#f00"/>
</svg>

<script src="https://cdn.jsdelivr.net/npm/bootstrap@5.3.0/dist/js/bootstrap.bundle.min.js"></script>
</body>
</html>
